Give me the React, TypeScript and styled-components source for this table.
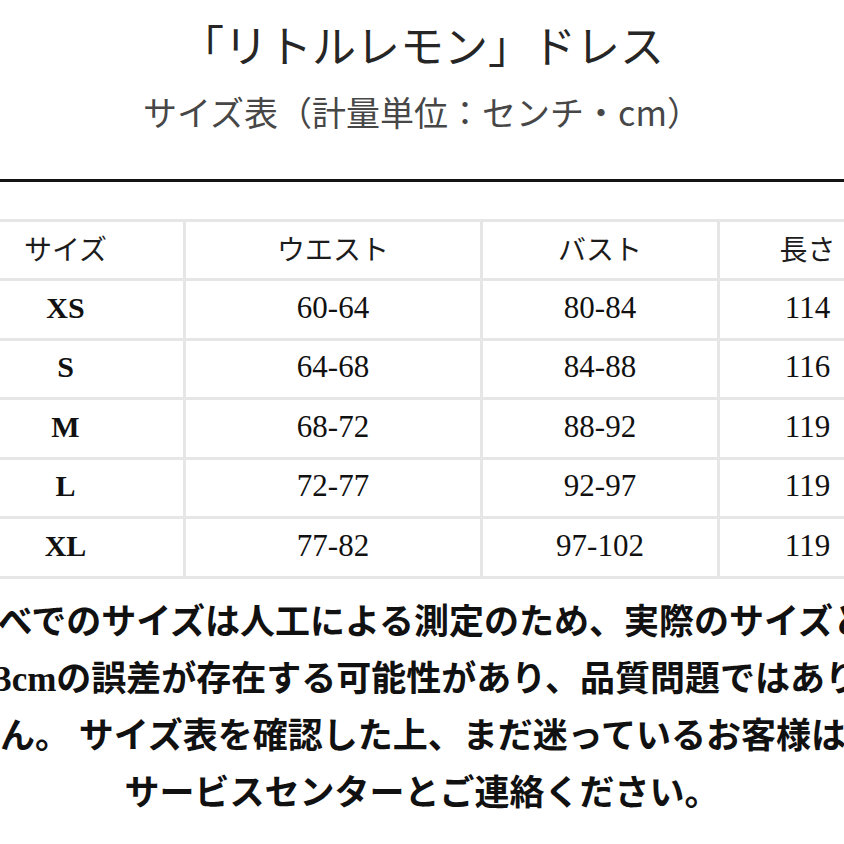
import React from 'react';
import styled, { createGlobalStyle } from 'styled-components';

const GlobalStyle = createGlobalStyle`
  html, body {
    margin: 0;
    padding: 0;
    background: #ffffff;
    overflow-x: hidden;
  }
  body {
    font-family: "Liberation Serif", "Noto Sans CJK JP", serif;
    color: #111111;
  }
`;

const Page = styled.div`
  width: 844px;
  height: 844px;
  overflow: hidden;
  background: #ffffff;
  padding-top: 18px;
  box-sizing: border-box;
`;

const Header = styled.header`
  display: flex;
  flex-direction: column;
  align-items: center;
  gap: 22px;
`;

const Title = styled.h1`
  margin: 0;
  font-family: "Noto Sans CJK JP", sans-serif;
  font-size: 44px;
  line-height: 52px;
  font-weight: 400;
  color: #262626;
  white-space: nowrap;
`;

const Subtitle = styled.h2`
  margin: 0;
  font-family: "Noto Sans CJK JP", sans-serif;
  font-size: 34px;
  line-height: 40px;
  font-weight: 400;
  color: #474747;
  white-space: nowrap;
`;

const Rule = styled.hr`
  margin: 47px 0 0;
  border: none;
  height: 3px;
  background: #141414;
`;

const Table = styled.table`
  margin: 37px 0 0 -55px;
  width: 950px;
  table-layout: fixed;
  border-collapse: collapse;
`;

const HeadCell = styled.th`
  height: 51px;
  padding: 0 0 5px;
  border: 3px solid #e6e6e6;
  text-align: center;
  font-family: "Noto Sans CJK JP", sans-serif;
  font-size: 28px;
  font-weight: 400;
  color: #1c1c1c;
`;

const Cell = styled.td<{ $label?: boolean }>`
  height: 53.5px;
  padding: 0 0 3px;
  border: 3px solid #e6e6e6;
  text-align: center;
  font-family: "Liberation Serif", "Noto Sans CJK JP", serif;
  font-size: ${(p) => (p.$label ? '30px' : '31px')};
  font-weight: ${(p) => (p.$label ? 700 : 400)};
  color: #111111;
`;

const Notes = styled.div`
  margin: 15px -35px 0;
  font-family: "Liberation Serif", "Noto Sans CJK JP", serif;
  font-size: 35px;
  line-height: 57px;
  font-weight: 700;
  color: #111111;
`;

const NoteLine = styled.div<{ $center?: boolean }>`
  white-space: nowrap;
  text-align: ${(p) => (p.$center ? 'center' : 'left')};
`;

const columns = [238, 297, 237, 178];
const headings = ['サイズ', 'ウエスト', 'バスト', '長さ'];

const rows = [
  { size: 'XS', waist: '60-64', bust: '80-84', length: '114' },
  { size: 'S', waist: '64-68', bust: '84-88', length: '116' },
  { size: 'M', waist: '68-72', bust: '88-92', length: '119' },
  { size: 'L', waist: '72-77', bust: '92-97', length: '119' },
  { size: 'XL', waist: '77-82', bust: '97-102', length: '119' },
];

const notes = [
  'すべでのサイズは人工による測定のため、実際のサイズと',
  '1-3cmの誤差が存在する可能性があり、品質問題ではありませ',
  'せん。 サイズ表を確認した上、まだ迷っているお客様は、',
];

const App: React.FC = () => {
  return (
    <>
      <GlobalStyle />
      <Page>
        <Header>
          <Title>「リトルレモン」ドレス</Title>
          <Subtitle>サイズ表（計量単位：センチ・cm）</Subtitle>
        </Header>

        <Rule />

        <Table>
          <colgroup>
            {columns.map((w, i) => (
              <col key={i} style={{ width: w }} />
            ))}
          </colgroup>
          <thead>
            <tr>
              {headings.map((h) => (
                <HeadCell key={h}>{h}</HeadCell>
              ))}
            </tr>
          </thead>
          <tbody>
            {rows.map((r) => (
              <tr key={r.size}>
                <Cell $label>{r.size}</Cell>
                <Cell>{r.waist}</Cell>
                <Cell>{r.bust}</Cell>
                <Cell>{r.length}</Cell>
              </tr>
            ))}
          </tbody>
        </Table>

        <Notes>
          {notes.map((line) => (
            <NoteLine key={line}>{line}</NoteLine>
          ))}
          <NoteLine $center>サービスセンターとご連絡ください。</NoteLine>
        </Notes>
      </Page>
    </>
  );
};

export default App;
